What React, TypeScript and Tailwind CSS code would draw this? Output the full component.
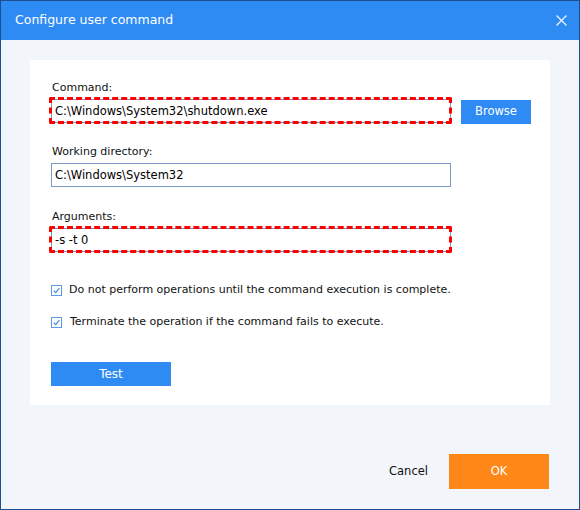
import React from 'react';

const font = { fontFamily: '"DejaVu Sans", Verdana, sans-serif' };

function CheckIcon() {
  return (
    <svg width="11" height="11" viewBox="0 0 11 11" className="shrink-0">
      <rect x="0.5" y="0.5" width="10" height="10" fill="#fff" stroke="#5b9be6" />
      <path d="M2.8 5.6 L4.8 7.7 L8.4 3" fill="none" stroke="#3a86e0" strokeWidth="1.2" />
    </svg>
  );
}

function Field({ label, value, marked }: { label: string; value: string; marked?: boolean }) {
  return (
    <div className="flex flex-col">
      <div className="h-[16px] pl-[1px] text-[11px] leading-[16px] text-[#111]">{label}</div>
      <div className="relative mt-[3px] w-[400px]">
        <div className="h-[24px] border border-[#7b9ac4] bg-white pl-[3px] text-[11.5px] leading-[22px] text-black">
          {value}
        </div>
        {marked && (
          <div className="pointer-events-none absolute -top-[2px] -bottom-[1px] -left-[2px] -right-[1px] rounded-[2px] border-[3px] border-dashed border-[#ff0000]" />
        )}
      </div>
    </div>
  );
}

export default function App() {
  return (
    <div
      className="flex h-[510px] w-[580px] flex-col border border-[#1d4e8d] bg-[#f2f5fa]"
      style={font}
    >
      <header className="flex h-[39px] shrink-0 items-center justify-between bg-[#2f8bf4] pl-[14px] pr-[12px]">
        <h1 className="text-[12.5px] text-white">Configure user command</h1>
        <svg width="11" height="11" viewBox="0 0 11 11">
          <path d="M0.5 0.5 L10.5 10.5 M10.5 0.5 L0.5 10.5" stroke="#e9f1fc" strokeWidth="1.4" />
        </svg>
      </header>

      <div className="px-[29px] pt-[20px]">
        <section className="h-[345px] bg-white pl-[21px] pt-[20px]">
          <div className="flex items-end">
            <Field label="Command:" value="C:\Windows\System32\shutdown.exe" marked />
            <button className="mb-[-1px] ml-[10px] h-[24px] w-[70px] bg-[#2f8bf4] text-[11.5px] text-white">
              Browse
            </button>
          </div>
          <div className="mt-[21px]">
            <Field label="Working directory:" value="C:\Windows\System32" />
          </div>
          <div className="mt-[22px]">
            <Field label="Arguments:" value="-s -t 0" marked />
          </div>

          <label className="mt-[30px] flex h-[16px] items-center gap-[7px] text-[11px] text-[#111]">
            <CheckIcon />
            <span>Do not perform operations until the command execution is complete.</span>
          </label>
          <label className="mt-[16px] flex h-[16px] items-center gap-[8px] text-[11px] text-[#111]">
            <CheckIcon />
            <span>Terminate the operation if the command fails to execute.</span>
          </label>

          <button className="mt-[32px] h-[24px] w-[120px] bg-[#2f8bf4] text-[12px] text-white">Test</button>
        </section>
      </div>

      <footer className="mt-auto mb-[20px] flex items-center justify-end pr-[30px]">
        <button className="mr-[21px] text-[11.5px] text-[#111]">Cancel</button>
        <button className="h-[35px] w-[100px] bg-[#ff8717] text-[11.5px] text-white">OK</button>
      </footer>
    </div>
  );
}
